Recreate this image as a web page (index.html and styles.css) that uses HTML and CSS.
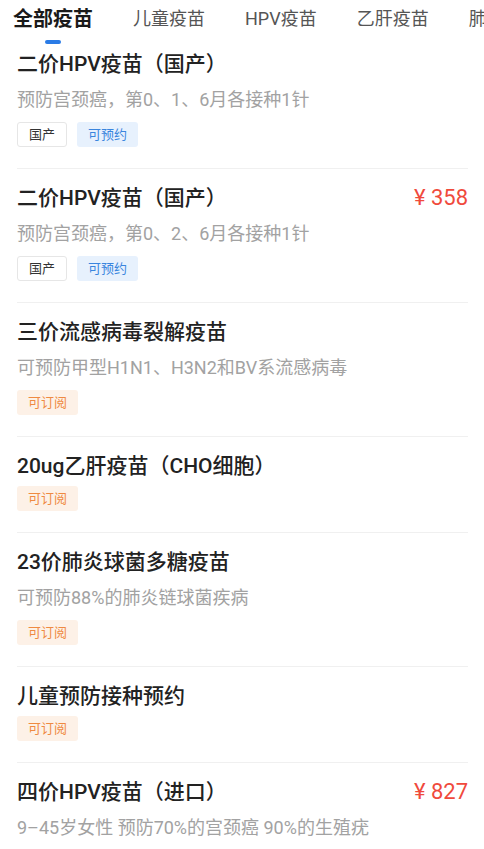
FILE: index.html
```html
<!DOCTYPE html>
<html lang="zh-CN">
<head>
<meta charset="utf-8">
<title>疫苗列表</title>
<link rel="stylesheet" href="styles.css">
</head>
<body>
<nav class="tabs">
  <div class="tab active"><span class="tab-label">全部疫苗</span><i class="tab-bar"></i></div>
  <div class="tab"><span class="tab-label">儿童疫苗</span></div>
  <div class="tab"><span class="tab-label">HPV疫苗</span></div>
  <div class="tab"><span class="tab-label">乙肝疫苗</span></div>
  <div class="tab"><span class="tab-label">肺炎疫苗</span></div>
</nav>
<ul class="list">
  <li class="item first">
    <div class="head"><h3 class="title">二价HPV疫苗（国产）</h3></div>
    <p class="desc">预防宫颈癌，第0、1、6月各接种1针</p>
    <div class="tags"><span class="tag plain">国产</span><span class="tag blue">可预约</span></div>
  </li>
  <li class="item">
    <div class="head"><h3 class="title">二价HPV疫苗（国产）</h3><span class="price">¥ 358</span></div>
    <p class="desc">预防宫颈癌，第0、2、6月各接种1针</p>
    <div class="tags"><span class="tag plain">国产</span><span class="tag blue">可预约</span></div>
  </li>
  <li class="item">
    <div class="head"><h3 class="title">三价流感病毒裂解疫苗</h3></div>
    <p class="desc">可预防甲型H1N1、H3N2和BV系流感病毒</p>
    <div class="tags"><span class="tag orange">可订阅</span></div>
  </li>
  <li class="item">
    <div class="head"><h3 class="title">20ug乙肝疫苗（CHO细胞）</h3></div>
    <div class="tags"><span class="tag orange">可订阅</span></div>
  </li>
  <li class="item">
    <div class="head"><h3 class="title">23价肺炎球菌多糖疫苗</h3></div>
    <p class="desc">可预防88%的肺炎链球菌疾病</p>
    <div class="tags"><span class="tag orange">可订阅</span></div>
  </li>
  <li class="item">
    <div class="head"><h3 class="title">儿童预防接种预约</h3></div>
    <div class="tags"><span class="tag orange">可订阅</span></div>
  </li>
  <li class="item">
    <div class="head"><h3 class="title">四价HPV疫苗（进口）</h3><span class="price">¥ 827</span></div>
    <p class="desc">9–45岁女性 预防70%的宫颈癌 90%的生殖疣</p>
  </li>
</ul>
</body>
</html>
```
FILE: styles.css
```css
* { box-sizing: border-box; }
html, body {
  margin: 0;
  padding: 0;
  background: #ffffff;
  font-family: "Roboto", "Noto Sans CJK SC", "Noto Sans", sans-serif;
  color: #222222;
  overflow: hidden;
}
.tabs {
  display: flex;
  gap: 40px;
  padding: 0 0 0 13px;
  height: 46px;
  white-space: nowrap;
  overflow: hidden;
  background: #ffffff;
}
.tab {
  display: flex;
  flex-direction: column;
  align-items: center;
  flex: none;
}
.tab-label {
  font-size: 18px;
  line-height: 38px;
  color: #555555;
}
.tab.active .tab-label {
  font-size: 20px;
  font-weight: 700;
  color: #1a1a1a;
}
.tab-bar {
  display: block;
  width: 16px;
  height: 4px;
  margin-top: 2px;
  border-radius: 2px;
  background: #2a7be6;
}
.list {
  list-style: none;
  margin: 0;
  padding: 0 16px 0 17px;
}
.item {
  padding: 16px 0 21px;
  border-bottom: 1px solid #f0f0f0;
}
.item.first { padding-top: 5px; }
.head {
  display: flex;
  justify-content: space-between;
  align-items: center;
}
.title {
  margin: 0;
  font-size: 21px;
  line-height: 26px;
  font-weight: 500;
  color: #222222;
}
.price {
  font-size: 22px;
  line-height: 26px;
  color: #f04a3c;
}
.desc {
  margin: 11px 0 0;
  font-size: 18px;
  line-height: 24px;
  color: #a2a2a2;
  white-space: nowrap;
}
.tags {
  display: flex;
  gap: 10px;
  margin-top: 7px;
}
.desc + .tags { margin-top: 10px; }
.tag {
  display: inline-block;
  height: 25px;
  line-height: 25px;
  padding: 0 11px;
  font-size: 13px;
  border-radius: 3px;
}
.tag.plain {
  line-height: 23px;
  border: 1px solid #e6e6e6;
  color: #333333;
  background: #ffffff;
}
.tag.blue {
  background: #e7f1fd;
  color: #3a85de;
}
.tag.orange {
  background: #fdf1e7;
  color: #ef8a42;
}
```
